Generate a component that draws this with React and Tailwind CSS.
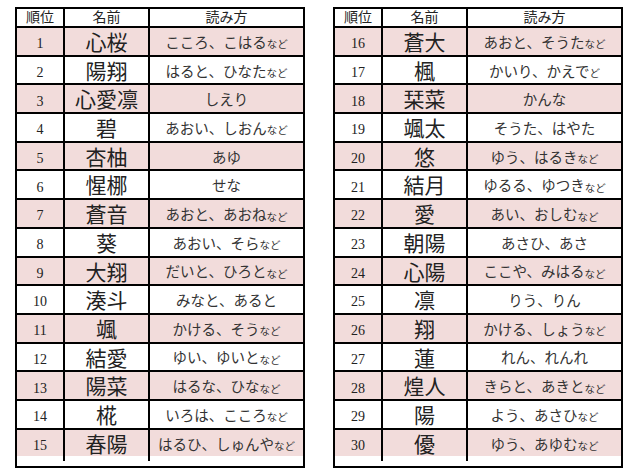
import React from "react";

const left = [
  ["1", "心桜", "こころ、こはる", "など"],
  ["2", "陽翔", "はると、ひなた", "など"],
  ["3", "心愛凛", "しえり", ""],
  ["4", "碧", "あおい、しおん", "など"],
  ["5", "杏柚", "あゆ", ""],
  ["6", "惺梛", "せな", ""],
  ["7", "蒼音", "あおと、あおね", "など"],
  ["8", "葵", "あおい、そら", "など"],
  ["9", "大翔", "だいと、ひろと", "など"],
  ["10", "湊斗", "みなと、あると", ""],
  ["11", "颯", "かける、そう", "など"],
  ["12", "結愛", "ゆい、ゆいと", "など"],
  ["13", "陽菜", "はるな、ひな", "など"],
  ["14", "椛", "いろは、こころ", "など"],
  ["15", "春陽", "はるひ、しゅんや", "など"],
];

const right = [
  ["16", "蒼大", "あおと、そうた", "など"],
  ["17", "楓", "かいり、かえで", "ど"],
  ["18", "栞菜", "かんな", ""],
  ["19", "颯太", "そうた、はやた", ""],
  ["20", "悠", "ゆう、はるき", "など"],
  ["21", "結月", "ゆるる、ゆつき", "など"],
  ["22", "愛", "あい、おしむ", "など"],
  ["23", "朝陽", "あさひ、あさ", ""],
  ["24", "心陽", "ここや、みはる", "など"],
  ["25", "凛", "りう、りん", ""],
  ["26", "翔", "かける、しょう", "など"],
  ["27", "蓮", "れん、れんれ", ""],
  ["28", "煌人", "きらと、あきと", "など"],
  ["29", "陽", "よう、あさひ", "など"],
  ["30", "優", "ゆう、あゆむ", "など"],
];

const jp = "font-['Liberation_Serif','Noto_Sans_CJK_JP',serif]";

const RankTable = ({ rows }) => {
  return (
    <div className={`w-[290px] border-2 border-black text-[#222] ${jp}`}>
      {/* header */}
      <div className="grid grid-cols-[46px_85px_1fr] h-[17px] text-[14px] leading-[17px] bg-white">
        <div className="text-center">順位</div>
        <div className="text-center border-l-2 border-black">名前</div>
        <div className="text-center border-l-2 border-black">読み方</div>
      </div>
      {rows.map((r, i) => (
        <div
          key={r[0]}
          className={`grid grid-cols-[46px_85px_1fr] h-[28.7px] border-t-2 border-black ${
            i % 2 === 0 ? "bg-[#f2dcdb]" : "bg-white"
          }`}
        >
          <div className="flex items-center justify-center text-[14px]">{r[0]}</div>
          <div className="flex items-center justify-center border-l-2 border-black text-[21px]">{r[1]}</div>
          <div className="flex items-center justify-center border-l-2 border-black text-[14.5px] text-[#333] whitespace-nowrap">
            <span>{r[2]}</span>
            {r[3] && <span className="text-[10.5px] mt-[3px]">{r[3]}</span>}
          </div>
        </div>
      ))}
    </div>
  );
};

export default function App() {
  return (
    <div className="w-[642px] h-[468px] bg-white flex gap-[28px] pl-[15px] pt-[7px]">
      <RankTable rows={left} />
      <RankTable rows={right} />
    </div>
  );
}
